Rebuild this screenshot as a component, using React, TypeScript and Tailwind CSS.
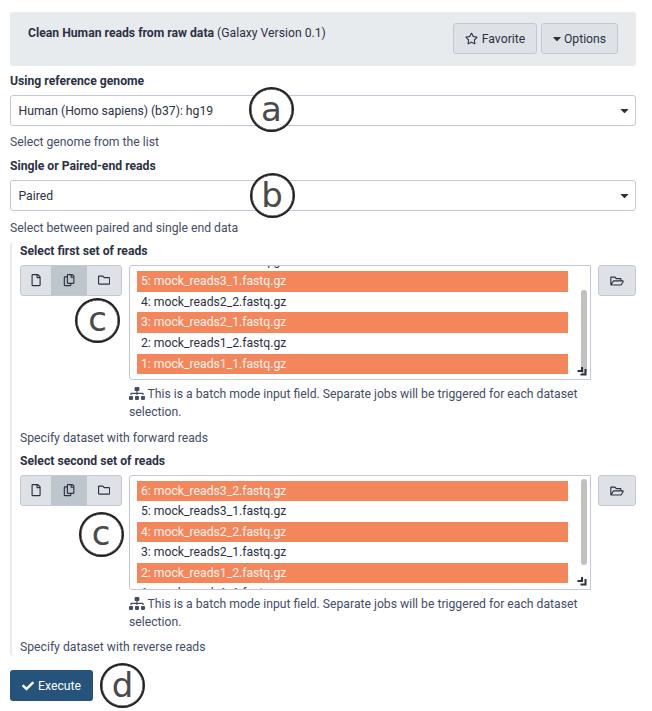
import type { ReactNode } from "react";
import {
  FaCaretDown,
  FaCheck,
  FaRegCopy,
  FaRegFile,
  FaRegFolder,
  FaRegFolderOpen,
  FaRegStar,
  FaSitemap,
} from "react-icons/fa";

function Marker({ letter, className }: { letter: string; className: string }) {
  return (
    <span
      className={`absolute z-10 flex h-[45px] w-[45px] items-center justify-center rounded-full border-2 border-[#222] bg-white font-['DejaVu_Sans',sans-serif] text-[34px] leading-none text-[#4a4a4a] shadow-[inset_0_0_0_0.5px_#222] ${className}`}
    >
      {letter}
    </span>
  );
}

function Label({ children }: { children: ReactNode }) {
  return <div className="h-[18px] font-bold">{children}</div>;
}

function SelectBox({ value, children }: { value: string; children: ReactNode }) {
  return (
    <div className="relative flex h-[31px] items-center justify-between rounded-[3px] border border-[#c5c7d9] pr-[6px] pl-[7.5px]">
      <span>{value}</span>
      <FaCaretDown className="h-[13px] w-[9px]" />
      {children}
    </div>
  );
}

function ResizeGrip() {
  return (
    <svg
      className="absolute right-[3px] bottom-[3px] h-[10px] w-[10px]"
      viewBox="0 0 10 10"
      fill="none"
      stroke="#2c3143"
      strokeWidth="2"
    >
      <path d="M5 1V5H0.5M8.5 3V8.5H3.5" />
    </svg>
  );
}

type ReadsProps = {
  label: string;
  help: string;
  helpGap: string;
  files: string[];
  selectedParity: number;
  listOffset: string;
  thumb: string;
  marker: string;
};

function ReadsField({
  label,
  help,
  helpGap,
  files,
  selectedParity,
  listOffset,
  thumb,
  marker,
}: ReadsProps) {
  return (
    <div>
      <Label>{label}</Label>
      <div className="mt-[5px] flex">
        <div className="relative h-[31px] w-[102px] shrink-0">
          <div className="flex h-full overflow-hidden rounded-[3px] border border-[#c5c7d9] bg-[#dee2e6] text-[12.2px]">
            <span className="flex w-[30px] items-center justify-center">
              <FaRegFile />
            </span>
            <span className="flex w-[36px] items-center justify-center bg-[#bec6cd] pl-px">
              <FaRegCopy />
            </span>
            <span className="flex flex-1 items-center justify-center">
              <FaRegFolder />
            </span>
          </div>
          <Marker letter="c" className={marker} />
        </div>
        <div className="ml-[7px] w-[462px]">
          <div className="relative h-[115px] overflow-hidden rounded-l-[3px] border border-[#c5c7d9] pl-[7px]">
            <div className={`w-[431px] ${listOffset}`}>
              {files.map((file, i) => (
                <div
                  key={file}
                  className={`h-[20.6px] pl-1 leading-[20.6px] ${
                    i % 2 === selectedParity ? "bg-[#f4865b] text-white/90" : ""
                  }`}
                >
                  {file}
                </div>
              ))}
            </div>
            <span className={`absolute right-[3px] w-[6px] rounded-full bg-[#c1c1c1] ${thumb}`} />
            <ResizeGrip />
          </div>
          <div className="mt-[5px] leading-[18px] text-[#454d66]">
            <FaSitemap className="mr-[2.5px] inline h-[13px] w-[16px] align-[-2px]" />
            This is a batch mode input field. Separate jobs will be triggered for each dataset selection.
          </div>
        </div>
        <div className="ml-[7px] flex h-[31px] w-[38px] items-center justify-center rounded-[3px] border border-[#c5c7d9] bg-[#dee2e6]">
          <FaRegFolderOpen className="h-3 w-[14px]" />
        </div>
      </div>
      <div className={`h-[18px] text-[#454d66] ${helpGap}`}>{help}</div>
    </div>
  );
}

const readFiles = [
  "6: mock_reads3_2.fastq.gz",
  "5: mock_reads3_1.fastq.gz",
  "4: mock_reads2_2.fastq.gz",
  "3: mock_reads2_1.fastq.gz",
  "2: mock_reads1_2.fastq.gz",
  "1: mock_reads1_1.fastq.gz",
];

export default function App() {
  return (
    <div className="h-[711px] w-[652px] bg-white pt-3 pr-4 pl-[10px] font-[Roboto,sans-serif] text-[12.19px] leading-[18px] text-[#2c3143]">
      <div className="flex h-[54px] justify-between rounded-[3px] bg-[#e8ebee] pt-[11px] pr-[18px] pl-[18px]">
        <div className="pt-px">
          <b>Clean Human reads from raw data</b> (Galaxy Version 0.1)
        </div>
        <div className="flex gap-1">
          <div className="flex h-[31px] w-[84px] items-center justify-center gap-1 rounded-[3px] border border-[#c5c7d9] bg-[#dee2e6]">
            <FaRegStar className="h-[13px] w-[13px]" />
            Favorite
          </div>
          <div className="flex h-[31px] w-[77px] items-center justify-center gap-[3px] rounded-[3px] border border-[#c5c7d9] bg-[#dee2e6]">
            <FaCaretDown className="h-[13px] w-2" />
            Options
          </div>
        </div>
      </div>
      <div className="mt-[6px]">
        <Label>Using reference genome</Label>
        <div className="mt-[5px]">
          <SelectBox value="Human (Homo sapiens) (b37): hg19">
            <Marker letter="a" className="top-[-9px] left-[238px] pb-px" />
          </SelectBox>
        </div>
        <div className="mt-[7px] text-[#454d66]">Select genome from the list</div>
      </div>
      <div className="mt-[6px]">
        <Label>Single or Paired-end reads</Label>
        <div className="mt-[5px]">
          <SelectBox value="Paired">
            <Marker letter="b" className="top-[-8.5px] left-[238.5px] pb-px" />
          </SelectBox>
        </div>
        <div className="mt-[8px] text-[#454d66]">Select between paired and single end data</div>
      </div>
      <div className="mt-[5px] flex h-[414px] flex-col gap-[5px] rounded-[3px] border-l-2 border-[#e8ebee] pl-2">
        <ReadsField
          label="Select first set of reads"
          help="Specify dataset with forward reads"
          helpGap="mt-2"
          files={readFiles}
          selectedParity={1}
          listOffset="-mt-[15.4px]"
          thumb="top-[24px] h-[84px]"
          marker="top-[33px] left-[55px] pb-[3px]"
        />
        <ReadsField
          label="Select second set of reads"
          help="Specify dataset with reverse reads"
          helpGap="mt-[7px]"
          files={readFiles}
          selectedParity={0}
          listOffset="mt-[4.5px]"
          thumb="top-[3px] h-[86px]"
          marker="top-[37px] left-[58.5px] pb-[3px]"
        />
      </div>
      <div className="relative mt-[14px] flex h-[31px] w-[83px] items-center justify-center gap-1 rounded-[3px] bg-[#25537b] text-white">
        <FaCheck className="h-3 w-3" />
        Execute
        <Marker letter="d" className="top-[-7px] left-[90px] pb-[2px]" />
      </div>
    </div>
  );
}
